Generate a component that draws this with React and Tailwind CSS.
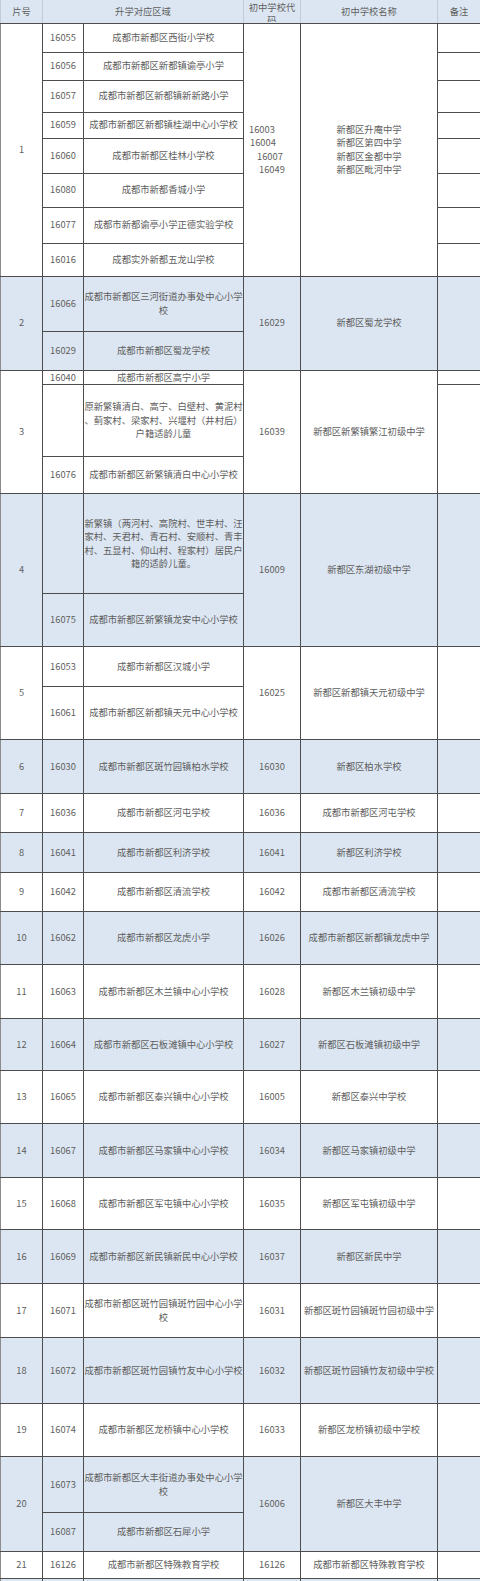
import React from "react";

const BLUE = "bg-[#dce6f2]";
const WHITE = "bg-white";

// each group: number, sub rows [height, code, desc], middle school code + name, notes split
const groups = [
	{
		no: "1",
		mid: "multi",
		name: ["新都区升庵中学", "新都区第四中学", "新都区金都中学", "新都区毗河中学"],
		rows: [
			[29, "16055", "成都市新都区西街小学校"],
			[28, "16056", "成都市新都区新都镇谕亭小学"],
			[32, "16057", "成都市新都区新都镇新新路小学"],
			[26, "16059", "成都市新都区新都镇桂湖中心小学校"],
			[35, "16060", "成都市新都区桂林小学校"],
			[34, "16080", "成都市新都香城小学"],
			[36, "16077", "成都市新都谕亭小学正德实验学校"],
			[33, "16016", "成都实外新都五龙山学校"],
		],
		notes: [1, 1, 1, 1, 1, 1, 1, 1],
	},
	{
		no: "2",
		mid: "16029",
		name: "新都区蜀龙学校",
		rows: [
			[55, "16066", ["成都市新都区三河街道办事处中心小学", "校"]],
			[39, "16029", "成都市新都区蜀龙学校"],
		],
		notes: [2],
	},
	{
		no: "3",
		mid: "16039",
		name: "新都区新繁镇繁江初级中学",
		rows: [
			[14, "16040", "成都市新都区高宁小学"],
			[72, "", ["原新繁镇清白、高宁、白壁村、黄泥村", "、蓟家村、梁家村、兴堰村（井村后）", "户籍适龄儿童"]],
			[37, "16076", "成都市新都区新繁镇清白中心小学校"],
		],
		notes: [1, 2],
	},
	{
		no: "4",
		mid: "16009",
		name: "新都区东湖初级中学",
		rows: [
			[100, "", ["新繁镇（两河村、高院村、世丰村、汪", "家村、天君村、青石村、安顺村、青丰", "村、五显村、仰山村、程家村）居民户", "籍的适龄儿童。"]],
			[53, "16075", "成都市新都区新繁镇龙安中心小学校"],
		],
		notes: [2],
	},
	{
		no: "5",
		mid: "16025",
		name: "新都区新都镇天元初级中学",
		rows: [
			[40, "16053", "成都市新都区汉城小学"],
			[53, "16061", "成都市新都区新都镇天元中心小学校"],
		],
		notes: [2],
	},
	{ no: "6", mid: "16030", name: "新都区柏水学校", rows: [[54, "16030", "成都市新都区斑竹园镇柏水学校"]] },
	{ no: "7", mid: "16036", name: "成都市新都区河屯学校", rows: [[39, "16036", "成都市新都区河屯学校"]] },
	{ no: "8", mid: "16041", name: "新都区利济学校", rows: [[40, "16041", "成都市新都区利济学校"]] },
	{ no: "9", mid: "16042", name: "成都市新都区清流学校", rows: [[39, "16042", "成都市新都区清流学校"]] },
	{ no: "10", mid: "16026", name: "成都市新都区新都镇龙虎中学", rows: [[53, "16062", "成都市新都区龙虎小学"]] },
	{ no: "11", mid: "16028", name: "新都区木兰镇初级中学", rows: [[54, "16063", "成都市新都区木兰镇中心小学校"]] },
	{ no: "12", mid: "16027", name: "新都区石板滩镇初级中学", rows: [[52, "16064", "成都市新都区石板滩镇中心小学校"]] },
	{ no: "13", mid: "16005", name: "新都区泰兴中学校", rows: [[53, "16065", "成都市新都区泰兴镇中心小学校"]] },
	{ no: "14", mid: "16034", name: "新都区马家镇初级中学", rows: [[54, "16067", "成都市新都区马家镇中心小学校"]] },
	{ no: "15", mid: "16035", name: "新都区军屯镇初级中学", rows: [[52, "16068", "成都市新都区军屯镇中心小学校"]] },
	{ no: "16", mid: "16037", name: "新都区新民中学", rows: [[54, "16069", "成都市新都区新民镇新民中心小学校"]] },
	{
		no: "17",
		mid: "16031",
		name: "新都区斑竹园镇斑竹园初级中学",
		rows: [[54, "16071", ["成都市新都区斑竹园镇斑竹园中心小学", "校"]]],
	},
	{ no: "18", mid: "16032", name: "新都区斑竹园镇竹友初级中学校", rows: [[66, "16072", "成都市新都区斑竹园镇竹友中心小学校"]] },
	{ no: "19", mid: "16033", name: "新都区龙桥镇初级中学校", rows: [[53, "16074", "成都市新都区龙桥镇中心小学校"]] },
	{
		no: "20",
		mid: "16006",
		name: "新都区大丰中学",
		rows: [
			[56, "16073", ["成都市新都区大丰街道办事处中心小学", "校"]],
			[39, "16087", "成都市新都区石犀小学"],
		],
		notes: [2],
	},
	{ no: "21", mid: "16126", name: "成都市新都区特殊教育学校", rows: [[27, "16126", "成都市新都区特殊教育学校"]] },
];

const td = "border border-[#4d4d4d] p-0 text-center align-middle whitespace-nowrap";
const tdFirst = "border-l-[#8c8c8c]";
const tdLast = "border-r-[#8c8c8c]";

function Text({ value }) {
	if (Array.isArray(value)) return value.map((l, i) => <div key={i}>{l}</div>);
	return value;
}

function MultiCodes() {
	return (
		<div className="text-left">
			<div className="pl-[5px]">16003</div>
			<div className="pl-[6px]">16004</div>
			<div className="pl-[13px]">16007</div>
			<div className="pl-[15px]">16049</div>
		</div>
	);
}

function Group({ g, idx }) {
	const bg = idx % 2 === 1 ? BLUE : WHITE;
	const n = g.rows.length;
	const notes = g.notes || [1];
	const noteStarts = {};
	let at = 0;
	notes.forEach((span) => {
		noteStarts[at] = span;
		at += span;
	});

	return g.rows.map(([h, code, desc], i) => (
		<tr key={i} className={bg} style={{ height: h }}>
			{i === 0 && (
				<td rowSpan={n} className={`${td} ${tdFirst}`}>
					{g.no}
				</td>
			)}
			<td className={td}>{code}</td>
			<td className={`${td} ${h < 20 ? "leading-[12px]" : ""}`}>
				<Text value={desc} />
			</td>
			{i === 0 && (
				<td rowSpan={n} className={td}>
					{g.mid === "multi" ? <MultiCodes /> : g.mid}
				</td>
			)}
			{i === 0 && (
				<td rowSpan={n} className={td}>
					<Text value={g.name} />
				</td>
			)}
			{noteStarts[i] && <td rowSpan={noteStarts[i]} className={`${td} ${tdLast}`}></td>}
		</tr>
	));
}

export default function App() {
	const th = "border-x border-[#c3ccd6] border-b border-b-[#4d4d4d] p-0 font-normal text-center align-middle whitespace-nowrap";
	return (
		<div className="w-[480px] bg-white font-['Noto_Sans_CJK_SC','Microsoft_YaHei',sans-serif] text-[9.3px] leading-[13.5px] text-[#5e5e5e]">
			<table className="w-[480px] table-fixed border-collapse">
				<colgroup>
					<col className="w-[42px]" />
					<col className="w-[41px]" />
					<col className="w-[160px]" />
					<col className="w-[57px]" />
					<col className="w-[137px]" />
					<col className="w-[43px]" />
				</colgroup>
				<thead>
					<tr className={BLUE} style={{ height: 23 }}>
						<th className={th}>片号</th>
						<th colSpan={2} className={th}>
							升学对应区域
						</th>
						<th className={`${th} align-top`}>
							<div className="h-[22px] overflow-hidden pt-px leading-[12.7px]">
								<div>初中学校代</div>
								<div>码</div>
							</div>
						</th>
						<th className={th}>初中学校名称</th>
						<th className={th}>备注</th>
					</tr>
				</thead>
				<tbody>
					{groups.map((g, idx) => (
						<Group key={g.no} g={g} idx={idx} />
					))}
					<tr className={BLUE} style={{ height: 3 }}>
						<td className={`${td} ${tdFirst}`}></td>
						<td className={td}></td>
						<td className={td}></td>
						<td className={td}></td>
						<td className={td}></td>
						<td className={`${td} ${tdLast}`}></td>
					</tr>
				</tbody>
			</table>
		</div>
	);
}
